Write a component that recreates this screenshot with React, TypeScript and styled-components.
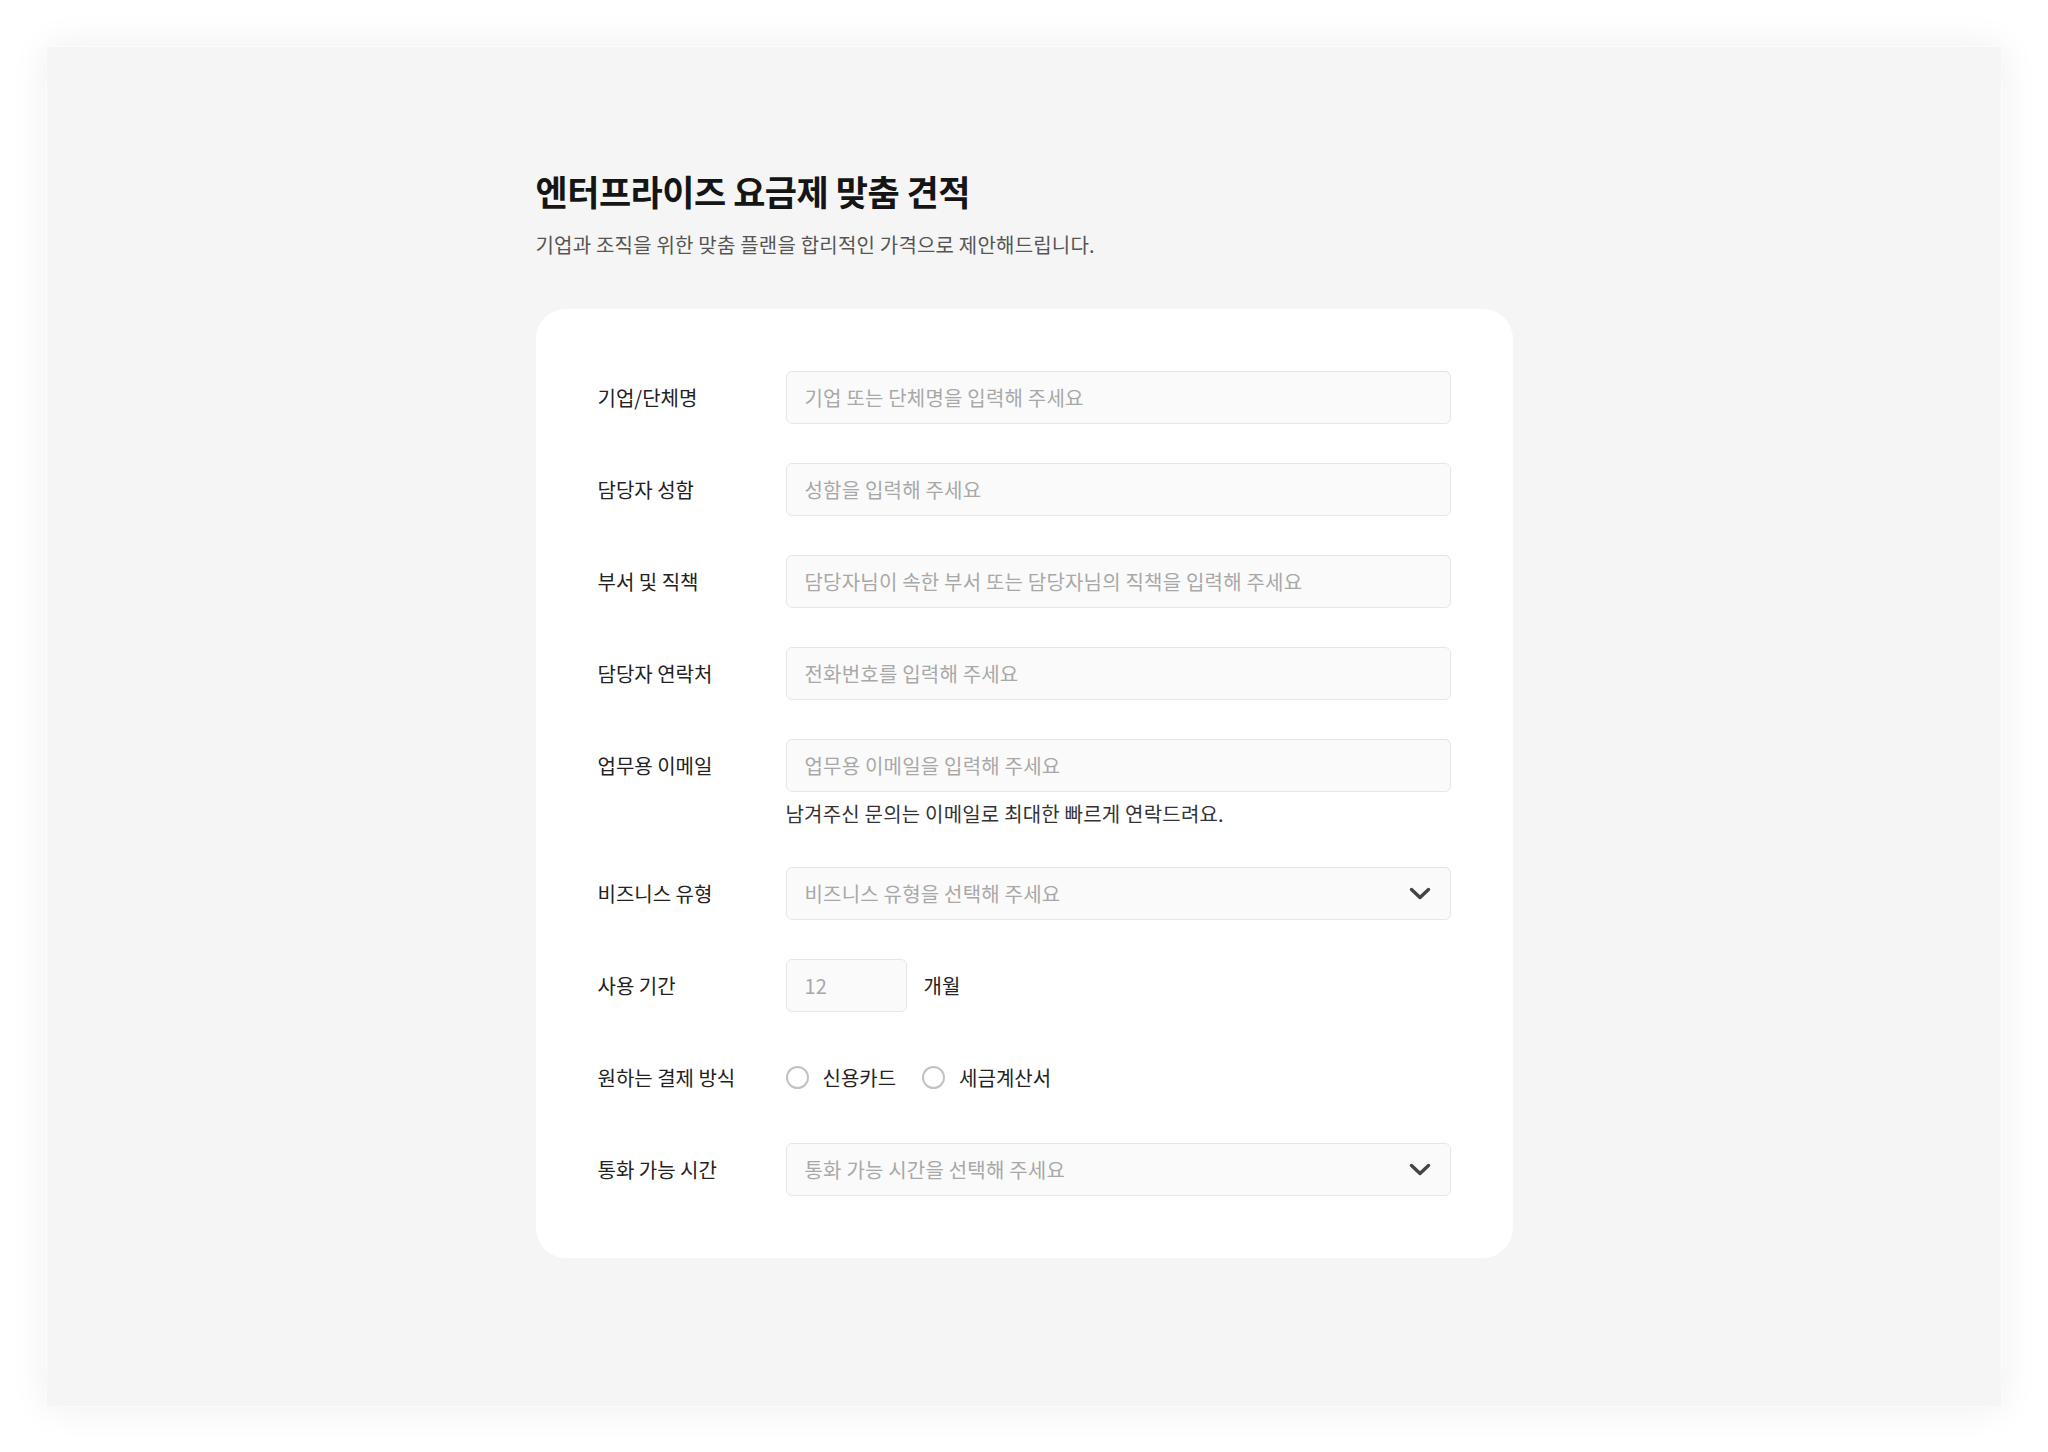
import React from "react";
import styled, { createGlobalStyle } from "styled-components";

const Global = createGlobalStyle`
  * { box-sizing: border-box; }
  html, body { margin: 0; padding: 0; background: #ffffff; }
  body {
    font-family: "Noto Sans CJK KR", "Noto Sans", sans-serif;
    color: #222222;
    -webkit-font-smoothing: antialiased;
  }
`;

const Frame = styled.div`
  width: 2048px;
  height: 1452px;
  padding: 46px 46px 45px 46px;
  background: #ffffff;
`;

const Panel = styled.main`
  height: 100%;
  background: #f5f5f5;
  border: 1px solid #fbfbfb;
  box-shadow: 0 0 36px rgba(0, 0, 0, 0.07);
  display: flex;
  justify-content: center;
  padding-top: 121px;
`;

const Content = styled.div`
  width: 977px;
  display: flex;
  flex-direction: column;
`;

const Title = styled.h1`
  margin: 0;
  font-size: 35px;
  line-height: 46px;
  font-weight: 700;
  letter-spacing: -0.5px;
  color: #151515;
`;

const Subtitle = styled.p`
  margin: 17px 0 0;
  font-size: 20px;
  line-height: 28px;
  font-weight: 400;
  letter-spacing: 0.2px;
  color: #555555;
`;

const Card = styled.section`
  margin-top: 50px;
  background: #ffffff;
  border-radius: 30px;
  padding: 62px;
  display: flex;
  flex-direction: column;
  gap: 39px;
`;

const Row = styled.div`
  display: grid;
  grid-template-columns: 188px 1fr;
  align-items: start;
`;

const Label = styled.label`
  height: 53px;
  display: flex;
  align-items: center;
  font-size: 20px;
  color: #222222;
`;

const Field = styled.div`
  display: flex;
  flex-direction: column;
`;

const TextInput = styled.input<{ $width?: number }>`
  width: ${(p) => (p.$width ? `${p.$width}px` : "100%")};
  height: 53px;
  padding: 0 18px;
  border: 1px solid #e6e6e6;
  border-radius: 6px;
  background: #fafafa;
  font-family: inherit;
  font-size: 20px;
  letter-spacing: 0.2px;
  color: #222222;
  outline: none;
  &::placeholder { color: #a8a8a8; }
`;

const Helper = styled.p`
  margin: 8px 0 0;
  font-size: 20px;
  line-height: 28px;
  letter-spacing: 0.2px;
  color: #333333;
`;

const SelectButton = styled.button`
  width: 100%;
  height: 53px;
  padding: 0 19px 0 18px;
  border: 1px solid #e6e6e6;
  border-radius: 6px;
  background: #fafafa;
  display: flex;
  align-items: center;
  justify-content: space-between;
  font-family: inherit;
  font-size: 20px;
  letter-spacing: 0.2px;
  color: #a8a8a8;
  cursor: pointer;
  text-align: left;
`;

const Inline = styled.div`
  height: 53px;
  display: flex;
  align-items: center;
`;

const Unit = styled.span`
  margin-left: 17px;
  font-size: 20px;
  color: #222222;
`;

const RadioOption = styled.label`
  display: flex;
  align-items: center;
  gap: 14px;
  margin-right: 26px;
  font-size: 20px;
  color: #222222;
  cursor: pointer;
`;

const Radio = styled.input`
  appearance: none;
  margin: 0;
  width: 23px;
  height: 23px;
  border: 2px solid #c2c2c2;
  border-radius: 50%;
  background: #ffffff;
`;

const Chevron = () => (
  <svg width="22" height="13" viewBox="0 0 22 13" fill="none">
    <polyline
      points="2.5,2.5 11,10.5 19.5,2.5"
      stroke="#444444"
      strokeWidth="3.4"
      strokeLinecap="round"
      strokeLinejoin="round"
    />
  </svg>
);

export default function App() {
  return (
    <>
      <Global />
      <Frame>
        <Panel>
          <Content>
            <Title>엔터프라이즈 요금제 맞춤 견적</Title>
            <Subtitle>기업과 조직을 위한 맞춤 플랜을 합리적인 가격으로 제안해드립니다.</Subtitle>
            <Card>
              <Row>
                <Label>기업/단체명</Label>
                <TextInput placeholder="기업 또는 단체명을 입력해 주세요" />
              </Row>
              <Row>
                <Label>담당자 성함</Label>
                <TextInput placeholder="성함을 입력해 주세요" />
              </Row>
              <Row>
                <Label>부서 및 직책</Label>
                <TextInput placeholder="담당자님이 속한 부서 또는 담당자님의 직책을 입력해 주세요" />
              </Row>
              <Row>
                <Label>담당자 연락처</Label>
                <TextInput placeholder="전화번호를 입력해 주세요" />
              </Row>
              <Row>
                <Label>업무용 이메일</Label>
                <Field>
                  <TextInput placeholder="업무용 이메일을 입력해 주세요" />
                  <Helper>남겨주신 문의는 이메일로 최대한 빠르게 연락드려요.</Helper>
                </Field>
              </Row>
              <Row>
                <Label>비즈니스 유형</Label>
                <SelectButton type="button">
                  <span>비즈니스 유형을 선택해 주세요</span>
                  <Chevron />
                </SelectButton>
              </Row>
              <Row>
                <Label>사용 기간</Label>
                <Inline>
                  <TextInput $width={121} placeholder="12" />
                  <Unit>개월</Unit>
                </Inline>
              </Row>
              <Row>
                <Label>원하는 결제 방식</Label>
                <Inline>
                  <RadioOption>
                    <Radio type="radio" name="pay" />
                    신용카드
                  </RadioOption>
                  <RadioOption>
                    <Radio type="radio" name="pay" />
                    세금계산서
                  </RadioOption>
                </Inline>
              </Row>
              <Row>
                <Label>통화 가능 시간</Label>
                <SelectButton type="button">
                  <span>통화 가능 시간을 선택해 주세요</span>
                  <Chevron />
                </SelectButton>
              </Row>
            </Card>
          </Content>
        </Panel>
      </Frame>
    </>
  );
}
